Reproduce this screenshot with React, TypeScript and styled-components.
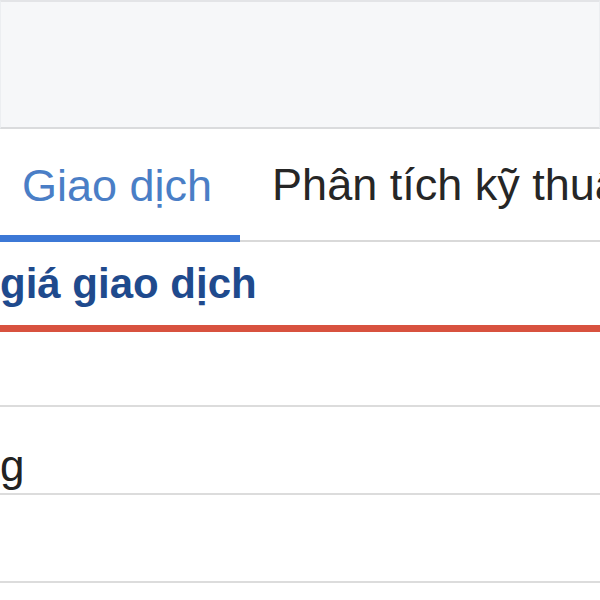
import styled, { createGlobalStyle } from "styled-components";

const GlobalStyle = createGlobalStyle`
  body {
    margin: 0;
    background: #ffffff;
    font-family: "Liberation Sans", Arial, "Noto Sans", sans-serif;
    overflow: hidden;
  }
`;

const Page = styled.div`
  width: 600px;
  height: 600px;
  overflow: hidden;
  display: flex;
  flex-direction: column;
`;

const TopPanel = styled.div`
  height: 125px;
  flex-shrink: 0;
  background: #f6f7f9;
  border-top: 2px solid #e3e4e7;
  border-bottom: 2px solid #dadbdd;
  border-left: 1px solid #eceef1;
  border-right: 1px solid #eceef1;
`;

const TabBar = styled.div`
  display: flex;
  height: 111px;
  flex-shrink: 0;
  border-bottom: 2px solid #d9d9d9;
  white-space: nowrap;
`;

const Tab = styled.div<{ $active?: boolean; $padLeft: number }>`
  display: flex;
  align-items: center;
  padding: 7px 28px 0 ${(p) => p.$padLeft}px;
  font-size: 45px;
  color: ${(p) => (p.$active ? "#4a7ec6" : "#262626")};
  border-bottom: 7px solid ${(p) => (p.$active ? "#3c78d6" : "transparent")};
  margin-bottom: ${(p) => (p.$active ? "-2px" : "0")};
`;

const SectionHeader = styled.div`
  height: 83px;
  flex-shrink: 0;
  display: flex;
  align-items: center;
  border-bottom: 7px solid #d8523f;
  font-size: 42px;
  font-weight: 700;
  color: #1f4a8d;
  white-space: nowrap;
`;

const Row = styled.div<{ $height: number }>`
  height: ${(p) => p.$height}px;
  flex-shrink: 0;
  display: flex;
  align-items: center;
  padding-top: 32px;
  box-sizing: border-box;
  border-bottom: 2px solid #dcdcdc;
  font-size: 44px;
  color: #222222;
  white-space: nowrap;
`;

export default function App() {
  return (
    <Page>
      <GlobalStyle />
      <TopPanel />
      <TabBar>
        <Tab $active $padLeft={22}>Giao dịch</Tab>
        <Tab $padLeft={32}>Phân tích kỹ thuật</Tab>
      </TabBar>
      <SectionHeader>giá giao dịch</SectionHeader>
      <Row $height={75} />
      <Row $height={88}>g</Row>
      <Row $height={88} />
      <Row $height={88} />
    </Page>
  );
}
